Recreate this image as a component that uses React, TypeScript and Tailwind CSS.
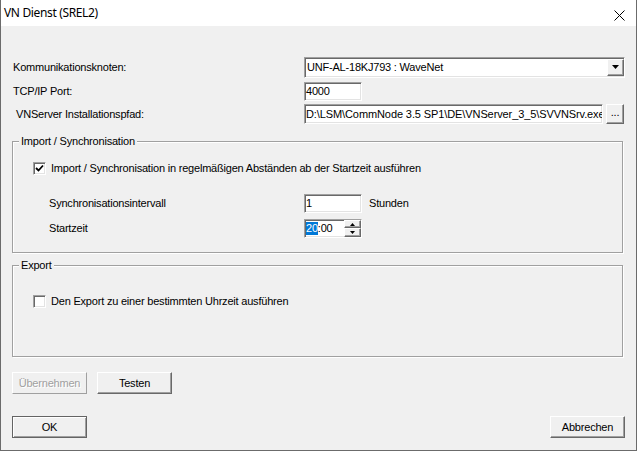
import React from 'react';

const font = 'font-["Liberation_Sans",Arial,sans-serif] text-[11px] tracking-[-0.2px] text-black';

function Sunken({ className = '', children }: { className?: string; children?: React.ReactNode }) {
  return (
    <div
      className={`border border-t-[#a0a0a0] border-l-[#a0a0a0] border-b-white border-r-white bg-white shadow-[inset_1px_1px_0_#696969,inset_-1px_-1px_0_#e3e3e3] ${className}`}
    >
      {children}
    </div>
  );
}

function Raised({ className = '', children }: { className?: string; children?: React.ReactNode }) {
  return (
    <div
      className={`border border-t-white border-l-white border-b-[#696969] border-r-[#696969] bg-[#f0f0f0] shadow-[inset_-1px_-1px_0_#a0a0a0] flex items-center justify-center ${className}`}
    >
      {children}
    </div>
  );
}

function Button({ label, variant = 'normal' }: { label: string; variant?: 'normal' | 'default' | 'disabled' }) {
  if (variant === 'default') {
    return (
      <div className="w-[75px] h-[22px] border border-[#646464] bg-[#f0f0f0] shadow-[inset_1px_1px_0_#fff,inset_-1px_-1px_0_#a0a0a0] flex items-center justify-center">
        {label}
      </div>
    );
  }
  if (variant === 'disabled') {
    return (
      <div className="w-[75px] h-[22px] border border-t-white border-l-white border-b-[#a0a0a0] border-r-[#a0a0a0] bg-[#f0f0f0] flex items-center justify-center text-[#a0a0a0] [text-shadow:1px_1px_0_#fff]">
        {label}
      </div>
    );
  }
  return <Raised className="w-[75px] h-[22px]">{label}</Raised>;
}

function Checkbox({ checked }: { checked?: boolean }) {
  return (
    <Sunken className="w-[13px] h-[13px] flex items-center justify-center shrink-0">
      {checked && (
        <svg width="9" height="9" viewBox="0 0 9 9">
          <path d="M1 4 L3.5 6.5 L8 1.5" stroke="#000" strokeWidth="1.8" fill="none" />
        </svg>
      )}
    </Sunken>
  );
}

function GroupBox({ title, className = '', children }: { title: string; className?: string; children?: React.ReactNode }) {
  return (
    <div className={`relative w-[611px] border border-[#a0a0a0] shadow-[1px_1px_0_#fff,inset_1px_1px_0_#fff] ${className}`}>
      <span className="absolute left-[6px] top-[-8px] px-[2px] bg-[#f0f0f0] leading-[14px]">{title}</span>
      {children}
    </div>
  );
}

function TriangleDown({ size = 7 }: { size?: number }) {
  return (
    <svg width={size} height={Math.ceil(size / 2) + 1} viewBox={`0 0 ${size} ${Math.ceil(size / 2) + 1}`}>
      <path d={`M0 0 L${size} 0 L${size / 2} ${Math.ceil(size / 2)} Z`} fill="#000" />
    </svg>
  );
}

export default function App() {
  return (
    <div className={`w-[637px] h-[451px] bg-[#f0f0f0] border-l border-r border-b border-[#6b6b6b] flex flex-col overflow-hidden ${font}`}>
      {/* Title bar */}
      <div className="h-[26px] bg-white flex items-center justify-between pl-[3px] pr-[11px] shrink-0">
        <span className='font-["Noto_Sans",sans-serif] text-[12px] tracking-[-0.35px] -mt-[1px]'>VN Dienst (SREL2)</span>
        <svg width="11" height="11" viewBox="0 0 11 11" className="mt-[4px]">
          <path d="M0.5 0.5 L10.5 10.5 M10.5 0.5 L0.5 10.5" stroke="#000" strokeWidth="1" />
        </svg>
      </div>

      <div className="pl-[11px] flex flex-col">
        {/* Kommunikationsknoten */}
        <div className="flex items-center mt-[31px] h-[21px]">
          <span className="w-[292px] pl-[1px]">Kommunikationsknoten:</span>
          <Sunken className="w-[321px] h-[21px] flex items-center justify-between">
            <span className="pl-[2px]">UNF-AL-18KJ793 : WaveNet</span>
            <Raised className="w-[17px] h-[17px]">
              <TriangleDown size={7} />
            </Raised>
          </Sunken>
        </div>

        {/* TCP/IP Port */}
        <div className="flex items-center mt-[4px] h-[19px]">
          <span className="w-[292px] pl-[1px]">TCP/IP Port:</span>
          <Sunken className="w-[58px] h-[19px] flex items-center pl-[1px]">4000</Sunken>
        </div>

        {/* Installationspfad */}
        <div className="flex items-center mt-[3px] h-[20px]">
          <span className="w-[292px] pl-[4px]">VNServer Installationspfad:</span>
          <Sunken className="w-[299px] h-[20px] flex items-center pl-[1px] overflow-hidden whitespace-nowrap tracking-[-0.1px]">
            D:\LSM\CommNode 3.5 SP1\DE\VNServer_3_5\SVVNSrv.exe
          </Sunken>
          <Raised className="ml-[3px] w-[18px] h-[20px] pb-[4px]">...</Raised>
        </div>

        {/* Import / Synchronisation */}
        <GroupBox title="Import / Synchronisation" className="mt-[17px] h-[112px] pt-[20px] pl-[20px]">
          <div className="flex items-center gap-[5px] h-[13px]">
            <Checkbox checked />
            <span>Import / Synchronisation in regelmäßigen Abständen ab der Startzeit ausführen</span>
          </div>
          <div className="flex items-center mt-[19px] pl-[16px] h-[19px]">
            <span className="w-[255px]">Synchronisationsintervall</span>
            <Sunken className="w-[58px] h-[19px] flex items-center pl-[1px]">1</Sunken>
            <span className="ml-[7px]">Stunden</span>
          </div>
          <div className="flex items-center mt-[6px] pl-[16px] h-[19px]">
            <span className="w-[255px]">Startzeit</span>
            <Sunken className="w-[58px] h-[19px] flex items-center">
              <div className="flex-1 flex items-center pl-[1px]">
                <span className="bg-[#0078d7] text-white leading-[13px]">20</span>
                <span>:00</span>
              </div>
              <div className="flex flex-col w-[17px] h-[17px]">
                <Raised className="h-[8px] w-[17px]">
                  <svg width="5" height="3" viewBox="0 0 5 3">
                    <path d="M0 3 L5 3 L2.5 0 Z" fill="#000" />
                  </svg>
                </Raised>
                <Raised className="h-[9px] w-[17px]">
                  <svg width="5" height="3" viewBox="0 0 5 3">
                    <path d="M0 0 L5 0 L2.5 3 Z" fill="#000" />
                  </svg>
                </Raised>
              </div>
            </Sunken>
          </div>
        </GroupBox>

        {/* Export */}
        <GroupBox title="Export" className="mt-[12px] h-[92px] pt-[29px] pl-[20px]">
          <div className="flex items-center gap-[5px] h-[13px]">
            <Checkbox />
            <span>Den Export zu einer bestimmten Uhrzeit ausführen</span>
          </div>
        </GroupBox>

        {/* Übernehmen / Testen */}
        <div className="flex gap-[10px] mt-[15px]">
          <Button label="Übernehmen" variant="disabled" />
          <Button label="Testen" />
        </div>

        {/* OK / Abbrechen */}
        <div className="flex justify-between w-[613px] mt-[22px]">
          <Button label="OK" variant="default" />
          <Button label="Abbrechen" />
        </div>
      </div>
    </div>
  );
}
